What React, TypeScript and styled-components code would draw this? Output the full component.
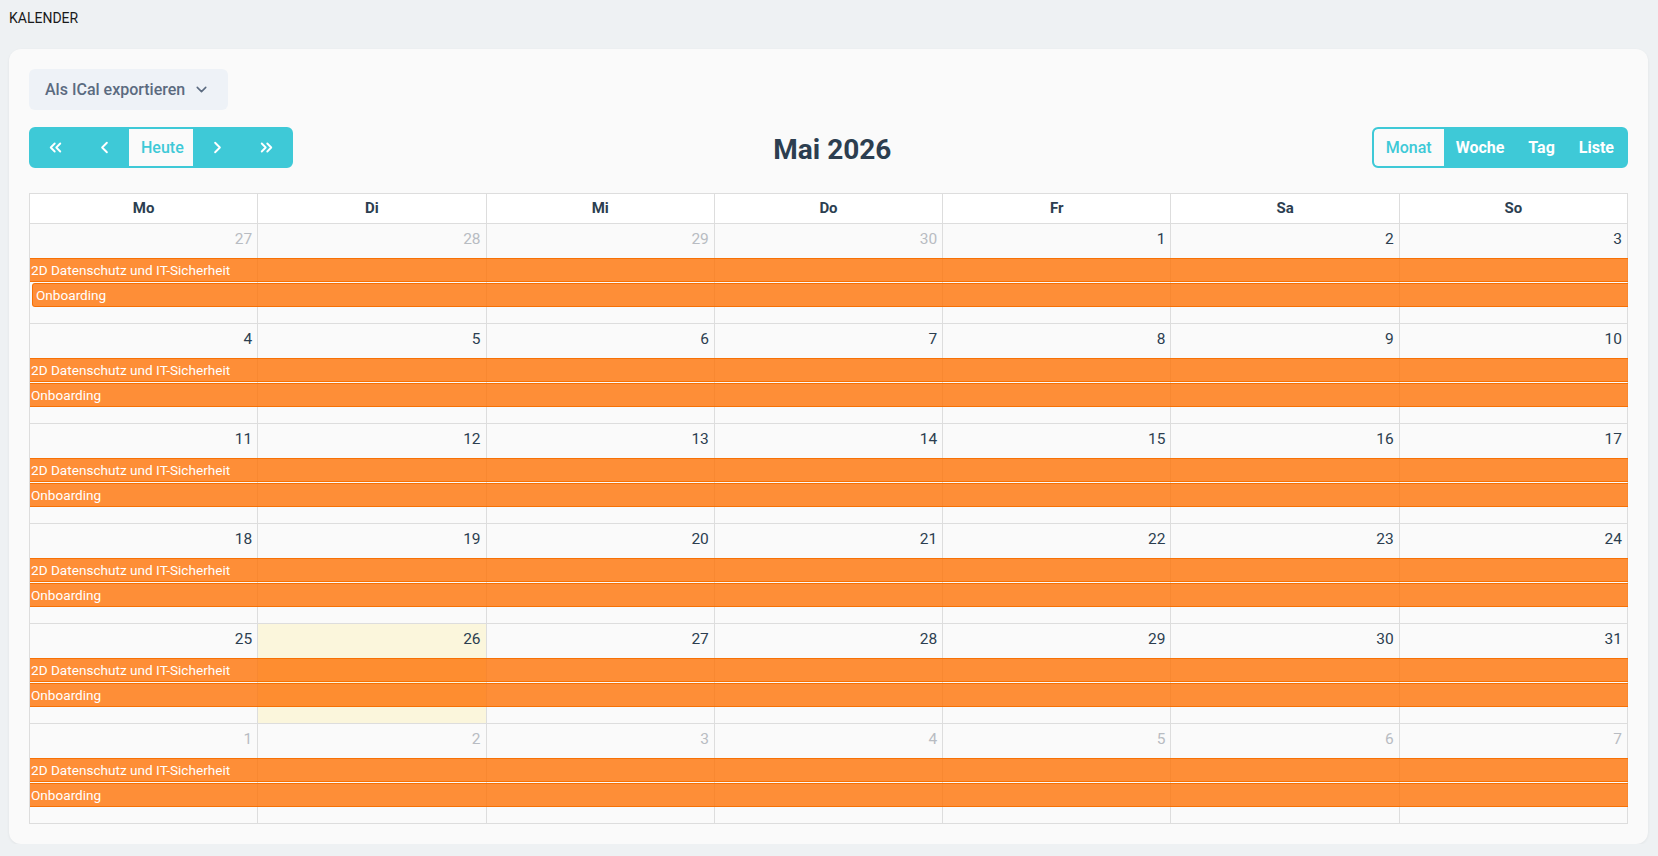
import styled, { createGlobalStyle } from "styled-components"
import { ChevronDown, ChevronLeft, ChevronRight, ChevronsLeft, ChevronsRight } from "lucide-react"

const GlobalStyle = createGlobalStyle`
    html, body {
        margin: 0;
        padding: 0;
        background: #eef1f3;
        font-family: Roboto, "Liberation Sans", Arial, sans-serif;
    }
`

const weekdays = ['Mo', 'Di', 'Mi', 'Do', 'Fr', 'Sa', 'So']

type Day = { n: number, other?: boolean, today?: boolean }

const weeks: Day[][] = [
    [{ n: 27, other: true }, { n: 28, other: true }, { n: 29, other: true }, { n: 30, other: true }, { n: 1 }, { n: 2 }, { n: 3 }],
    [4, 5, 6, 7, 8, 9, 10].map(n => ({ n })),
    [11, 12, 13, 14, 15, 16, 17].map(n => ({ n })),
    [18, 19, 20, 21, 22, 23, 24].map(n => ({ n })),
    [{ n: 25 }, { n: 26, today: true }, { n: 27 }, { n: 28 }, { n: 29 }, { n: 30 }, { n: 31 }],
    [1, 2, 3, 4, 5, 6, 7].map(n => ({ n, other: true })),
]

const views = ['Monat', 'Woche', 'Tag', 'Liste']

const App = () => {
    return (
        <>
            <GlobalStyle />
            <PageTitle>KALENDER</PageTitle>
            <Card>
                <ExportButton>
                    Als ICal exportieren
                    <ChevronDown size={17} strokeWidth={2.2} />
                </ExportButton>
                <Toolbar>
                    <ButtonGroup>
                        <NavButton><ChevronsLeft size={19} strokeWidth={2.4} /></NavButton>
                        <NavButton><ChevronLeft size={19} strokeWidth={2.4} /></NavButton>
                        <TextButton $active $width={64}>Heute</TextButton>
                        <NavButton><ChevronRight size={19} strokeWidth={2.4} /></NavButton>
                        <NavButton><ChevronsRight size={19} strokeWidth={2.4} /></NavButton>
                    </ButtonGroup>
                    <Title>Mai 2026</Title>
                    <ButtonGroup>
                        {views.map((v, i) => (
                            <TextButton key={v} $active={i === 0} $bold>{v}</TextButton>
                        ))}
                    </ButtonGroup>
                </Toolbar>
                <Grid>
                    <HeaderRow>
                        {weekdays.map(d => <HeaderCell key={d}>{d}</HeaderCell>)}
                    </HeaderRow>
                    {weeks.map((week, wi) => (
                        <WeekRow key={wi}>
                            {week.map((day, di) => (
                                <DayCell key={di} $today={day.today} style={{ gridColumn: di + 1 }}>
                                    <DayNumber $other={day.other}>{day.n}</DayNumber>
                                </DayCell>
                            ))}
                            <EventStack>
                                <EventBar>2D Datenschutz und IT-Sicherheit</EventBar>
                                <EventBar $start={wi === 0}>Onboarding</EventBar>
                            </EventStack>
                        </WeekRow>
                    ))}
                </Grid>
            </Card>
        </>
    )
}

export default App;

const PageTitle = styled.div`
    height: 49px;
    box-sizing: border-box;
    padding: 10px 9px 0;
    font-size: 14px;
    line-height: 16px;
    color: #1a1a1a;
`

const Card = styled.div`
    margin: 0 10px 0 9px;
    padding: 20px;
    background: #fafafa;
    border-radius: 12px;
    box-shadow: 0 1px 3px rgba(0, 0, 0, 0.06);
`

const ExportButton = styled.button`
    display: inline-flex;
    align-items: center;
    gap: 8px;
    height: 41px;
    padding: 0 18px 0 16px;
    border: none;
    border-radius: 6px;
    background: #eef2f7;
    color: #5b6b80;
    font-family: Roboto, "Liberation Sans", sans-serif;
    font-size: 16px;
    font-weight: 500;
`

const Toolbar = styled.div`
    display: flex;
    align-items: center;
    justify-content: space-between;
    margin-top: 17px;
    margin-bottom: 25px;
`

const ButtonGroup = styled.div`
    display: flex;
    height: 41px;
    box-sizing: border-box;
    border: 2px solid #3ec9d7;
    border-radius: 6px;
    background: #3ec9d7;
    overflow: hidden;
`

const NavButton = styled.button`
    width: 49px;
    display: flex;
    align-items: center;
    justify-content: center;
    border: none;
    padding: 0;
    background: transparent;
    color: #fff;
`

const TextButton = styled.button<{ $active?: boolean, $bold?: boolean, $width?: number }>`
    padding: 0 12px;
    width: ${p => p.$width ? `${p.$width}px` : 'auto'};
    border: none;
    border-radius: ${p => p.$active && p.$bold ? '4px 0 0 4px' : '0'};
    background: ${p => p.$active ? '#fafafa' : 'transparent'};
    color: ${p => p.$active ? '#3ec9d7' : '#fff'};
    font-family: Roboto, "Liberation Sans", sans-serif;
    font-size: 16px;
    font-weight: ${p => p.$bold && !p.$active ? 700 : 500};
`

const Title = styled.h2`
    margin: 4px 0 0;
    font-size: 28px;
    font-weight: 700;
    color: #2c3e50;
`

const Grid = styled.div`
    border-left: 1px solid #ddd;
    border-top: 1px solid #ddd;
`

const HeaderRow = styled.div`
    display: grid;
    grid-template-columns: repeat(7, 1fr);
    background: #fff;
`

const HeaderCell = styled.div`
    height: 29px;
    line-height: 29px;
    text-align: center;
    border-right: 1px solid #ddd;
    border-bottom: 1px solid #ddd;
    font-size: 15px;
    font-weight: 700;
    color: #2c3e50;
`

const WeekRow = styled.div`
    display: grid;
    grid-template-columns: repeat(7, 1fr);
    grid-template-rows: 34px auto 1fr;
    height: 100px;
`

const DayCell = styled.div<{ $today?: boolean }>`
    grid-row: 1 / -1;
    border-right: 1px solid #ddd;
    border-bottom: 1px solid #ddd;
    background: ${p => p.$today ? '#fbf6dc' : 'transparent'};
    text-align: right;
    padding: 5px 5px 0 0;
`

const DayNumber = styled.span<{ $other?: boolean }>`
    font-size: 15.5px;
    color: ${p => p.$other ? '#b8bcc2' : '#2c3e50'};
`

const EventStack = styled.div`
    grid-column: 1 / -1;
    grid-row: 2;
    display: flex;
    flex-direction: column;
    gap: 1px;
`

const EventBar = styled.div<{ $start?: boolean }>`
    height: 24px;
    box-sizing: border-box;
    margin-left: ${p => p.$start ? '2px' : '0'};
    padding-left: ${p => p.$start ? '3px' : '1px'};
    border-top: 1px solid rgba(245, 110, 0, 0.9);
    border-bottom: 1px solid rgba(245, 110, 0, 0.9);
    border-left: ${p => p.$start ? '1px solid rgba(245, 110, 0, 0.9)' : 'none'};
    border-radius: ${p => p.$start ? '3px 0 0 3px' : '0'};
    background: rgba(255, 112, 0, 0.78);
    color: #fff;
    font-size: 13.6px;
    line-height: 22px;
    white-space: nowrap;
`
